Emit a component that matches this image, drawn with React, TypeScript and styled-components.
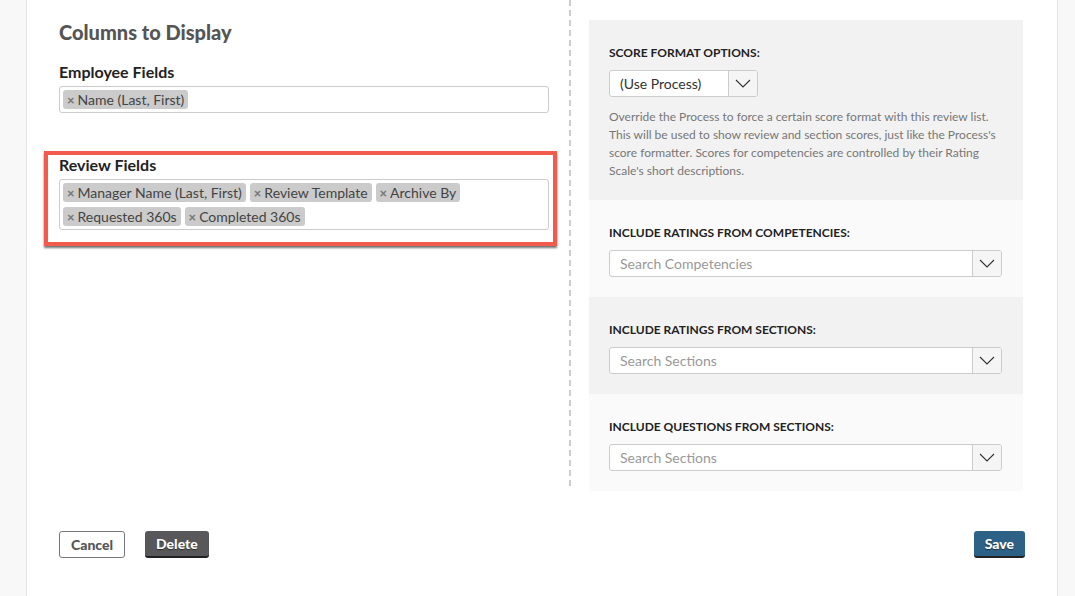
import styled, {createGlobalStyle, css} from "styled-components";

const GlobalStyle = createGlobalStyle`
    html, body {
        margin: 0;
        padding: 0;
        background: #f8f8f8;
        font-family: 'Lato', 'Liberation Sans', sans-serif;
        color: #333;
    }
    * {
        box-sizing: border-box;
    }
`

const Card = styled.div`
    width: 1032px;
    height: 596px;
    margin-left: 26px;
    background: #fff;
    border-left: 1px solid #e6e6e6;
    border-right: 1px solid #e6e6e6;
    padding: 0 32px;
    overflow: hidden;
`

const Main = styled.div`
    display: flex;
    height: 490px;
`

const LeftColumn = styled.div`
    width: 510px;
    padding: 20px 20px 0 0;
`

const Divider = styled.div`
    width: 2px;
    height: 487px;
    background: repeating-linear-gradient(to bottom, #cfcfcf 0 6px, transparent 6px 10px);
`

const RightColumn = styled.div`
    padding: 20px 0 0 18px;
    display: flex;
    flex-direction: column;
`

const Title = styled.h2`
    margin: 0 0 18px;
    font-size: 20px;
    line-height: 24px;
    font-weight: 900;
    color: #555;
`

const FieldGroup = styled.div<{ $highlighted?: boolean }>`
    ${({$highlighted}) => $highlighted && css`
        margin: 38px -8px 0 -15px;
        padding: 0 4px 12px 11px;
        border: 4px solid #f25a4b;
        box-shadow: 0 2px 2px rgba(0, 0, 0, 0.55);
    `}
`

const FieldLabel = styled.div`
    font-size: 16px;
    line-height: 19px;
    font-weight: 700;
    color: #222;
    margin-bottom: 5px;
`

const TagInput = styled.div`
    display: flex;
    flex-wrap: wrap;
    gap: 5px 4px;
    padding: 3px;
    border: 1px solid #ccc;
    border-radius: 3px;
    background: #fff;
    min-height: 27px;
`

const Tag = styled.span`
    display: inline-flex;
    align-items: center;
    height: 19px;
    padding: 0 4px;
    background: #cbcbcb;
    border-radius: 3px;
    font-size: 14px;
    color: #444;
    white-space: nowrap;
`

const TagRemove = styled.span`
    font-size: 13px;
    font-weight: 900;
    color: #7a7a7a;
    margin-right: 3px;
`

const Panel = styled.div<{ $shade: 'dark' | 'light' }>`
    width: 434px;
    padding: 25px 21px 20px 20px;
    background: ${({$shade}) => $shade === 'dark' ? '#f2f2f2' : '#fafafa'};
`

const PanelLabel = styled.div`
    font-size: 12px;
    line-height: 16px;
    font-weight: 700;
    color: #222;
    text-transform: uppercase;
    margin-bottom: 9px;
`

const Select = styled.div<{ $width?: number }>`
    display: flex;
    width: ${({$width}) => $width ? `${$width}px` : '100%'};
    height: 27px;
    border: 1px solid #ccc;
    border-radius: 3px;
    background: #fff;
    overflow: hidden;
`

const SelectValue = styled.div<{ $placeholder?: boolean }>`
    flex: 1;
    padding: 0 10px;
    font-size: 14px;
    line-height: 25px;
    color: ${({$placeholder}) => $placeholder ? '#999' : '#333'};
`

const SelectArrow = styled.div`
    width: 29px;
    display: flex;
    align-items: center;
    justify-content: center;
    border-left: 1px solid #ccc;
    background: #f5f5f5;
`

const Description = styled.p`
    margin: 11px 0 0;
    font-size: 12px;
    line-height: 18px;
    color: #777;
`

const Footer = styled.div`
    display: flex;
    align-items: center;
    gap: 20px;
    margin-top: 41px;
`

const Spacer = styled.div`
    flex: 1;
`

const Button = styled.button<{ $variant: 'outline' | 'dark' | 'primary' }>`
    height: 27px;
    padding: 0 11px;
    border-radius: 3px;
    font-family: inherit;
    font-size: 14px;
    font-weight: 900;
    cursor: pointer;
    ${({$variant}) => $variant === 'outline' ? css`
        background: #fff;
        color: #555;
        border: 1px solid #777;
    ` : css`
        color: #fff;
        border: none;
        border-bottom: 2px solid #222;
        text-shadow: 0 1px 1px rgba(0, 0, 0, 0.5);
        background: ${$variant === 'dark' ? '#58585a' : '#2e6186'};
    `}
`

const Chevron = () => (
    <svg width="16" height="9" viewBox="0 0 16 9">
        <path d="M1 1 L8 8 L15 1" fill="none" stroke="#333" strokeWidth="1.1"/>
    </svg>
)

const TagList = ({tags}: { tags: string[] }) => (
    <TagInput>
        {tags.map(t => (
            <Tag key={t}><TagRemove>×</TagRemove>{t}</Tag>
        ))}
    </TagInput>
)

const SearchPanel = ({label, placeholder, shade}: { label: string, placeholder: string, shade: 'dark' | 'light' }) => (
    <Panel $shade={shade}>
        <PanelLabel>{label}</PanelLabel>
        <Select>
            <SelectValue $placeholder>{placeholder}</SelectValue>
            <SelectArrow><Chevron/></SelectArrow>
        </Select>
    </Panel>
)

export default function App() {
    return (
        <>
            <GlobalStyle/>
            <Card>
                <Main>
                    <LeftColumn>
                        <Title>Columns to Display</Title>
                        <FieldGroup>
                            <FieldLabel>Employee Fields</FieldLabel>
                            <TagList tags={['Name (Last, First)']}/>
                        </FieldGroup>
                        <FieldGroup $highlighted>
                            <FieldLabel>Review Fields</FieldLabel>
                            <TagList tags={[
                                'Manager Name (Last, First)',
                                'Review Template',
                                'Archive By',
                                'Requested 360s',
                                'Completed 360s',
                            ]}/>
                        </FieldGroup>
                    </LeftColumn>
                    <Divider/>
                    <RightColumn>
                        <Panel $shade="dark">
                            <PanelLabel>Score Format Options:</PanelLabel>
                            <Select $width={149}>
                                <SelectValue>(Use Process)</SelectValue>
                                <SelectArrow><Chevron/></SelectArrow>
                            </Select>
                            <Description>
                                Override the Process to force a certain score format with this review list.
                                This will be used to show review and section scores, just like the Process's
                                score formatter. Scores for competencies are controlled by their Rating
                                Scale's short descriptions.
                            </Description>
                        </Panel>
                        <SearchPanel shade="light" label="Include Ratings from Competencies:" placeholder="Search Competencies"/>
                        <SearchPanel shade="dark" label="Include Ratings from Sections:" placeholder="Search Sections"/>
                        <SearchPanel shade="light" label="Include Questions from Sections:" placeholder="Search Sections"/>
                    </RightColumn>
                </Main>
                <Footer>
                    <Button $variant="outline">Cancel</Button>
                    <Button $variant="dark">Delete</Button>
                    <Spacer/>
                    <Button $variant="primary">Save</Button>
                </Footer>
            </Card>
        </>
    );
}
